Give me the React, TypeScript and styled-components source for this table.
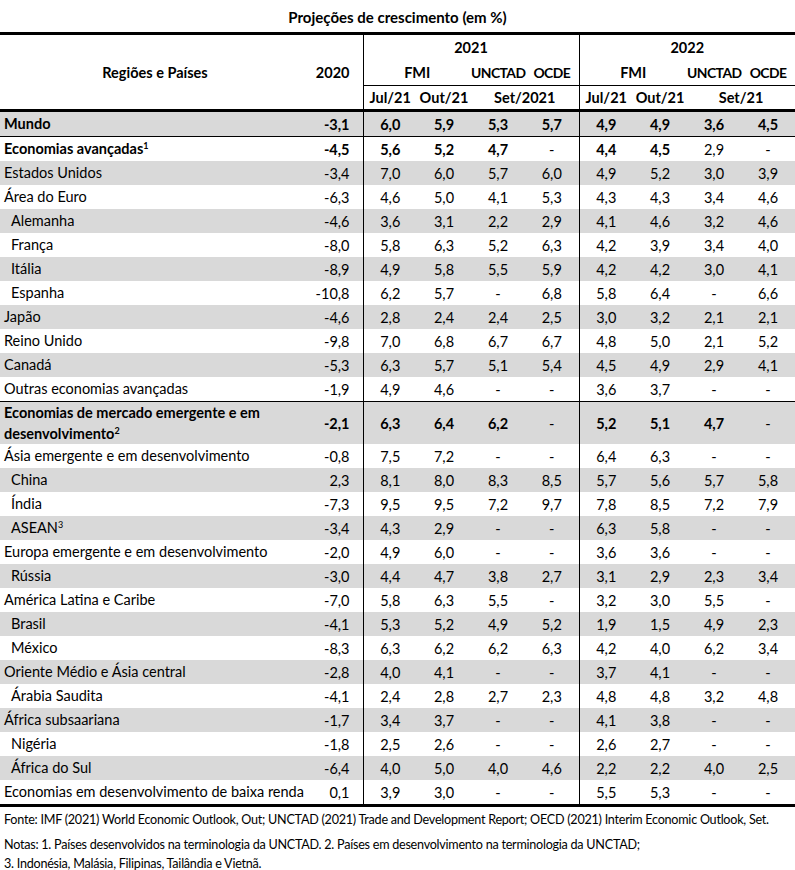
import React from "react";
import styled, { createGlobalStyle } from "styled-components";

const Global = createGlobalStyle`
  html, body { margin: 0; padding: 0; background: #fff; }
  body { font-family: Lato, "Open Sans", sans-serif; color: #000; }
`;

const Page = styled.div`
  width: 795px;
  font-size: 14.5px;
`;

const Title = styled.div`
  height: 32px;
  line-height: 34px;
  text-align: center;
  font-weight: 700;
  font-size: 15px;
`;

const Table = styled.table`
  width: 795px;
  border-collapse: collapse;
  table-layout: fixed;
  border-top: 3px solid #000;
  border-bottom: 3px solid #000;
`;

const Head = styled.thead`
  border-bottom: 3px solid #000;
`;

const HeadRow = styled.tr<{ $h: number }>`
  height: ${(p) => p.$h}px;
`;

const HeadCell = styled.th<{
  $divide?: boolean;
  $under?: boolean;
  $align?: string;
  $pad?: number;
  $tight?: boolean;
}>`
  padding: 0 ${(p) => p.$pad ?? 0}px 0 0;
  font-weight: 700;
  font-size: ${(p) => (p.$tight ? "13.9px" : "inherit")};
  text-align: ${(p) => (p.$align ?? "center")};
  vertical-align: middle;
  white-space: nowrap;
  letter-spacing: ${(p) => (p.$tight ? "-0.55px" : "0")};
  border-left: ${(p) => (p.$divide ? "1px solid #000" : "none")};
  border-bottom: ${(p) => (p.$under ? "1px solid #000" : "none")};
`;

const Row = styled.tr<{ $shade: boolean; $rule?: boolean }>`
  background: ${(p) => (p.$shade ? "#d9d9d9" : "#fff")};
  border-bottom: ${(p) => (p.$rule ? "1px solid #000" : "none")};
  height: 24px;
`;

const Label = styled.td<{ $indent?: boolean; $bold?: boolean; $wrap?: boolean }>`
  padding: 0 0 0 ${(p) => (p.$indent ? 11 : 4)}px;
  font-weight: ${(p) => (p.$bold ? 700 : 400)};
  white-space: ${(p) => (p.$wrap ? "normal" : "nowrap")};
  line-height: ${(p) => (p.$wrap ? "21px" : "24px")};
  text-align: left;
`;

const Value = styled.td<{ $bold?: boolean; $divide?: boolean; $first?: boolean }>`
  padding: 0 ${(p) => (p.$first ? 13 : 0)}px 0 0;
  text-align: ${(p) => (p.$first ? "right" : "center")};
  font-weight: ${(p) => (p.$bold ? 700 : 400)};
  border-left: ${(p) => (p.$divide ? "1px solid #000" : "none")};
  white-space: nowrap;
`;

const Sup = styled.sup`
  font-size: 9px;
  line-height: 0;
  vertical-align: 5px;
`;

const Notes = styled.div`
  padding: 3px 0 0 4px;
  font-size: 12.6px;
  letter-spacing: -0.25px;
  line-height: 19.5px;
  white-space: nowrap;
`;

const NoteLine = styled.div<{ $gap?: number }>`
  margin-top: ${(p) => p.$gap ?? 0}px;
`;

type Line = {
  label: string;
  sup?: string;
  indent?: boolean;
  bold?: boolean;
  plain?: number[];
  rule?: boolean;
  wrap?: boolean;
  v: string[];
};

const d = (s: string) => s.split(" ");

const rows: Line[] = [
  { label: "Mundo", bold: true, rule: true, v: d("-3,1 6,0 5,9 5,3 5,7 4,9 4,9 3,6 4,5") },
  { label: "Economias avançadas", sup: "1", bold: true, plain: [7], v: d("-4,5 5,6 5,2 4,7 - 4,4 4,5 2,9 -") },
  { label: "Estados Unidos", v: d("-3,4 7,0 6,0 5,7 6,0 4,9 5,2 3,0 3,9") },
  { label: "Área do Euro", v: d("-6,3 4,6 5,0 4,1 5,3 4,3 4,3 3,4 4,6") },
  { label: "Alemanha", indent: true, v: d("-4,6 3,6 3,1 2,2 2,9 4,1 4,6 3,2 4,6") },
  { label: "França", indent: true, v: d("-8,0 5,8 6,3 5,2 6,3 4,2 3,9 3,4 4,0") },
  { label: "Itália", indent: true, v: d("-8,9 4,9 5,8 5,5 5,9 4,2 4,2 3,0 4,1") },
  { label: "Espanha", indent: true, v: d("-10,8 6,2 5,7 - 6,8 5,8 6,4 - 6,6") },
  { label: "Japão", v: d("-4,6 2,8 2,4 2,4 2,5 3,0 3,2 2,1 2,1") },
  { label: "Reino Unido", v: d("-9,8 7,0 6,8 6,7 6,7 4,8 5,0 2,1 5,2") },
  { label: "Canadá", v: d("-5,3 6,3 5,7 5,1 5,4 4,5 4,9 2,9 4,1") },
  { label: "Outras economias avançadas", rule: true, v: d("-1,9 4,9 4,6 - - 3,6 3,7 - -") },
  { label: "Economias de mercado emergente e em desenvolvimento", sup: "2", bold: true, wrap: true, v: d("-2,1 6,3 6,4 6,2 - 5,2 5,1 4,7 -") },
  { label: "Ásia emergente e em desenvolvimento", v: d("-0,8 7,5 7,2 - - 6,4 6,3 - -") },
  { label: "China", indent: true, v: d("2,3 8,1 8,0 8,3 8,5 5,7 5,6 5,7 5,8") },
  { label: "Índia", indent: true, v: d("-7,3 9,5 9,5 7,2 9,7 7,8 8,5 7,2 7,9") },
  { label: "ASEAN", sup: "3", indent: true, v: d("-3,4 4,3 2,9 - - 6,3 5,8 - -") },
  { label: "Europa emergente e em desenvolvimento", v: d("-2,0 4,9 6,0 - - 3,6 3,6 - -") },
  { label: "Rússia", indent: true, v: d("-3,0 4,4 4,7 3,8 2,7 3,1 2,9 2,3 3,4") },
  { label: "América Latina e Caribe", v: d("-7,0 5,8 6,3 5,5 - 3,2 3,0 5,5 -") },
  { label: "Brasil", indent: true, v: d("-4,1 5,3 5,2 4,9 5,2 1,9 1,5 4,9 2,3") },
  { label: "México", indent: true, v: d("-8,3 6,3 6,2 6,2 6,3 4,2 4,0 6,2 3,4") },
  { label: "Oriente Médio e Ásia central", v: d("-2,8 4,0 4,1 - - 3,7 4,1 - -") },
  { label: "Árabia Saudita", indent: true, v: d("-4,1 2,4 2,8 2,7 2,3 4,8 4,8 3,2 4,8") },
  { label: "África subsaariana", v: d("-1,7 3,4 3,7 - - 4,1 3,8 - -") },
  { label: "Nigéria", indent: true, v: d("-1,8 2,5 2,6 - - 2,6 2,7 - -") },
  { label: "África do Sul", indent: true, v: d("-6,4 4,0 5,0 4,0 4,6 2,2 2,2 4,0 2,5") },
  { label: "Economias em desenvolvimento de baixa renda", v: d("0,1 3,9 3,0 - - 5,5 5,3 - -") },
];

const widths = [310, 53, 54, 54, 54, 54, 54, 54, 54, 54];

export default function App() {
  return (
    <Page>
      <Global />
      <Title>Projeções de crescimento (em %)</Title>
      <Table>
        <colgroup>
          {widths.map((w, i) => (
            <col key={i} style={{ width: w }} />
          ))}
        </colgroup>
        <Head>
          <HeadRow $h={26}>
            <HeadCell rowSpan={3}>Regiões e Países</HeadCell>
            <HeadCell rowSpan={3} $align="right" $pad={13}>
              2020
            </HeadCell>
            <HeadCell colSpan={4} $divide>
              2021
            </HeadCell>
            <HeadCell colSpan={4} $divide>
              2022
            </HeadCell>
          </HeadRow>
          <HeadRow $h={26}>
            <HeadCell colSpan={2} $divide $under>
              FMI
            </HeadCell>
            <HeadCell $under $tight>
              UNCTAD
            </HeadCell>
            <HeadCell $under $tight>
              OCDE
            </HeadCell>
            <HeadCell colSpan={2} $divide $under>
              FMI
            </HeadCell>
            <HeadCell $under $tight>
              UNCTAD
            </HeadCell>
            <HeadCell $under $tight>
              OCDE
            </HeadCell>
          </HeadRow>
          <HeadRow $h={25}>
            <HeadCell $divide>Jul/21</HeadCell>
            <HeadCell>Out/21</HeadCell>
            <HeadCell colSpan={2}>Set/2021</HeadCell>
            <HeadCell $divide>Jul/21</HeadCell>
            <HeadCell>Out/21</HeadCell>
            <HeadCell colSpan={2}>Set/21</HeadCell>
          </HeadRow>
        </Head>
        <tbody>
          {rows.map((r, i) => (
            <Row key={r.label} $shade={i % 2 === 0} $rule={r.rule}>
              <Label $indent={r.indent} $bold={r.bold} $wrap={r.wrap}>
                {r.label}
                {r.sup && <Sup>{r.sup}</Sup>}
              </Label>
              {r.v.map((x, j) => (
                <Value
                  key={j}
                  $first={j === 0}
                  $divide={j === 1 || j === 5}
                  $bold={!!r.bold && x !== "-" && !(r.plain || []).includes(j)}
                >
                  {x}
                </Value>
              ))}
            </Row>
          ))}
        </tbody>
      </Table>
      <Notes>
        <NoteLine>
          Fonte: IMF (2021) World Economic Outlook, Out; UNCTAD (2021) Trade and Development Report; OECD (2021) Interim
          Economic Outlook, Set.
        </NoteLine>
        <NoteLine $gap={5}>
          Notas: 1. Países desenvolvidos na terminologia da UNCTAD. 2. Países em desenvolvimento na terminologia da UNCTAD;
        </NoteLine>
        <NoteLine>3. Indonésia, Malásia, Filipinas, Tailândia e Vietnã.</NoteLine>
      </Notes>
    </Page>
  );
}
